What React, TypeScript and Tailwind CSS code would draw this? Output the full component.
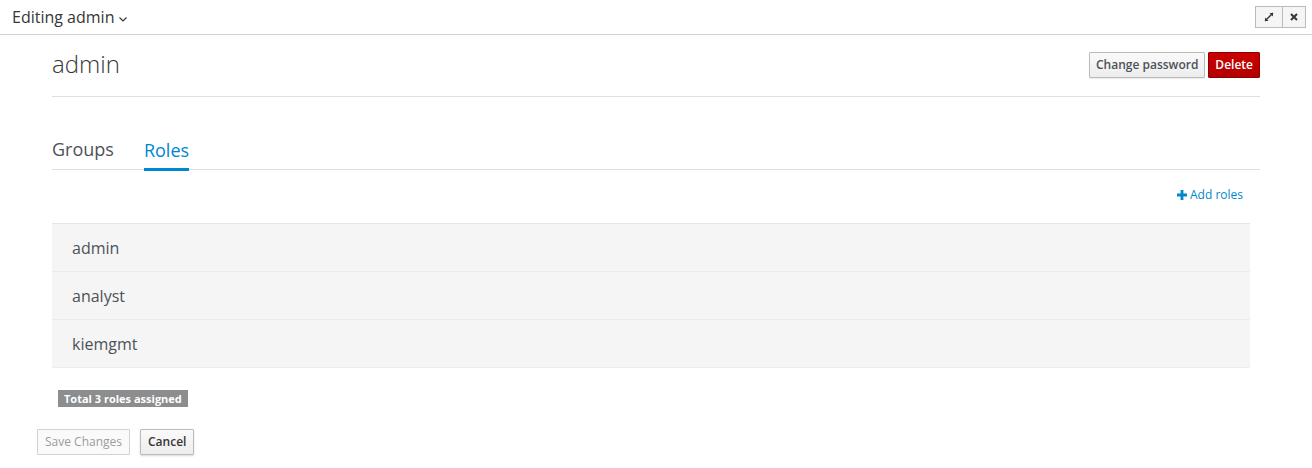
import React from "react";

const font = { fontFamily: '"Open Sans", "Noto Sans", sans-serif' };

export default function App() {
  return (
    <div className="w-[1312px] h-[468px] bg-white text-[#363636] overflow-hidden" style={font}>
      {/* header */}
      <div className="h-[35px] border-b border-[#d1d1d1] flex items-center justify-between pl-[12px] pr-[6px]">
        <div className="flex items-center gap-[4px] text-[16px] text-[#363636]">
          <span>Editing admin</span>
          <svg width="10" height="8" viewBox="0 0 10 8" className="mt-[4px]">
            <path d="M1.5 2.5 L5 6 L8.5 2.5" fill="none" stroke="#363636" strokeWidth="1.2" />
          </svg>
        </div>
        <div className="flex">
          <button className="w-[28px] h-[22px] border border-[#bbb] bg-[#f5f5f5] flex items-center justify-center">
            <svg width="10" height="10" viewBox="0 0 10 10">
              <path d="M1 9 L9 1" stroke="#363636" strokeWidth="1.3" />
              <path d="M5.5 1 L9 1 L9 4.5 Z" fill="#363636" />
              <path d="M1 5.5 L1 9 L4.5 9 Z" fill="#363636" />
            </svg>
          </button>
          <button className="w-[23px] h-[22px] border border-l-0 border-[#bbb] bg-[#f5f5f5] flex items-center justify-center">
            <svg width="8" height="8" viewBox="0 0 8 8">
              <path d="M1 1 L7 7 M7 1 L1 7" stroke="#363636" strokeWidth="2" />
            </svg>
          </button>
        </div>
      </div>

      <div className="pl-[52px] pr-[52px]">
        {/* title row */}
        <div className="flex items-center justify-between h-[62px] border-b border-[#e0e0e0]">
          <h1 className="text-[24px] font-light text-[#363636] leading-none mt-[-4px]">admin</h1>
          <div className="flex gap-[3px] mt-[-2px]">
            <button className="h-[26px] px-[6px] text-[12px] font-semibold text-[#4d5258] border border-[#bbb] rounded-[1px] bg-gradient-to-b from-[#fafafa] to-[#ededed] shadow-[0_1px_1px_rgba(3,3,3,0.08)]">
              Change password
            </button>
            <button className="h-[26px] px-[6px] text-[12px] font-semibold text-white border border-[#8b0000] rounded-[1px] bg-gradient-to-b from-[#cc0000] to-[#b30000]">
              Delete
            </button>
          </div>
        </div>

        {/* tabs */}
        <div className="mt-[38px] flex gap-[30px] border-b border-[#e0e0e0] h-[35px] items-end">
          <div className="text-[18px] text-[#4d5258] pb-[8px] leading-[24px]">Groups</div>
          <div className="text-[18px] text-[#0088ce] pb-[6px] leading-[24px] border-b-[3px] border-[#0088ce] mb-[-2px]">Roles</div>
        </div>

        {/* add roles */}
        <div className="flex justify-end pr-[17px] mt-[15px] h-[20px] items-center">
          <div className="flex items-center gap-[3px] text-[12px] text-[#0088ce]">
            <svg width="10" height="10" viewBox="0 0 10 10">
              <path d="M3.6 0 H6.4 V3.6 H10 V6.4 H6.4 V10 H3.6 V6.4 H0 V3.6 H3.6 Z" fill="#0088ce" />
            </svg>
            <span>Add roles</span>
          </div>
        </div>

        {/* list */}
        <div className="mt-[18px] mr-[10px] border-t border-[#e5e5e5]">
          {["admin", "analyst", "kiemgmt"].map((r, i) => (
            <div
              key={r}
              className={`h-[48px] bg-[#f5f5f5] flex items-center pl-[20px] text-[16px] text-[#4d5258] ${i < 2 ? "border-b border-[#ececec]" : "border-b border-[#ededed]"}`}
            >
              {r}
            </div>
          ))}
        </div>

        {/* badge */}
        <div className="mt-[17px] ml-[6px]">
          <span className="inline-block bg-[#8b8d8f] text-white text-[11px] font-bold px-[6px] h-[17px] leading-[17px]">
            Total 3 roles assigned
          </span>
        </div>
      </div>

      {/* footer buttons */}
      <div className="flex gap-[10px] pl-[37px] mt-[20px]">
        <button className="h-[26px] px-[7px] text-[12px] text-[#9c9c9c] border border-[#d1d1d1] bg-[#fafafa] rounded-[1px]">
          Save Changes
        </button>
        <button className="h-[26px] px-[7px] text-[12px] font-semibold text-[#363636] border border-[#bbb] rounded-[1px] bg-gradient-to-b from-[#fafafa] to-[#ededed] shadow-[0_1px_2px_rgba(3,3,3,0.15)]">
          Cancel
        </button>
      </div>
    </div>
  );
}
